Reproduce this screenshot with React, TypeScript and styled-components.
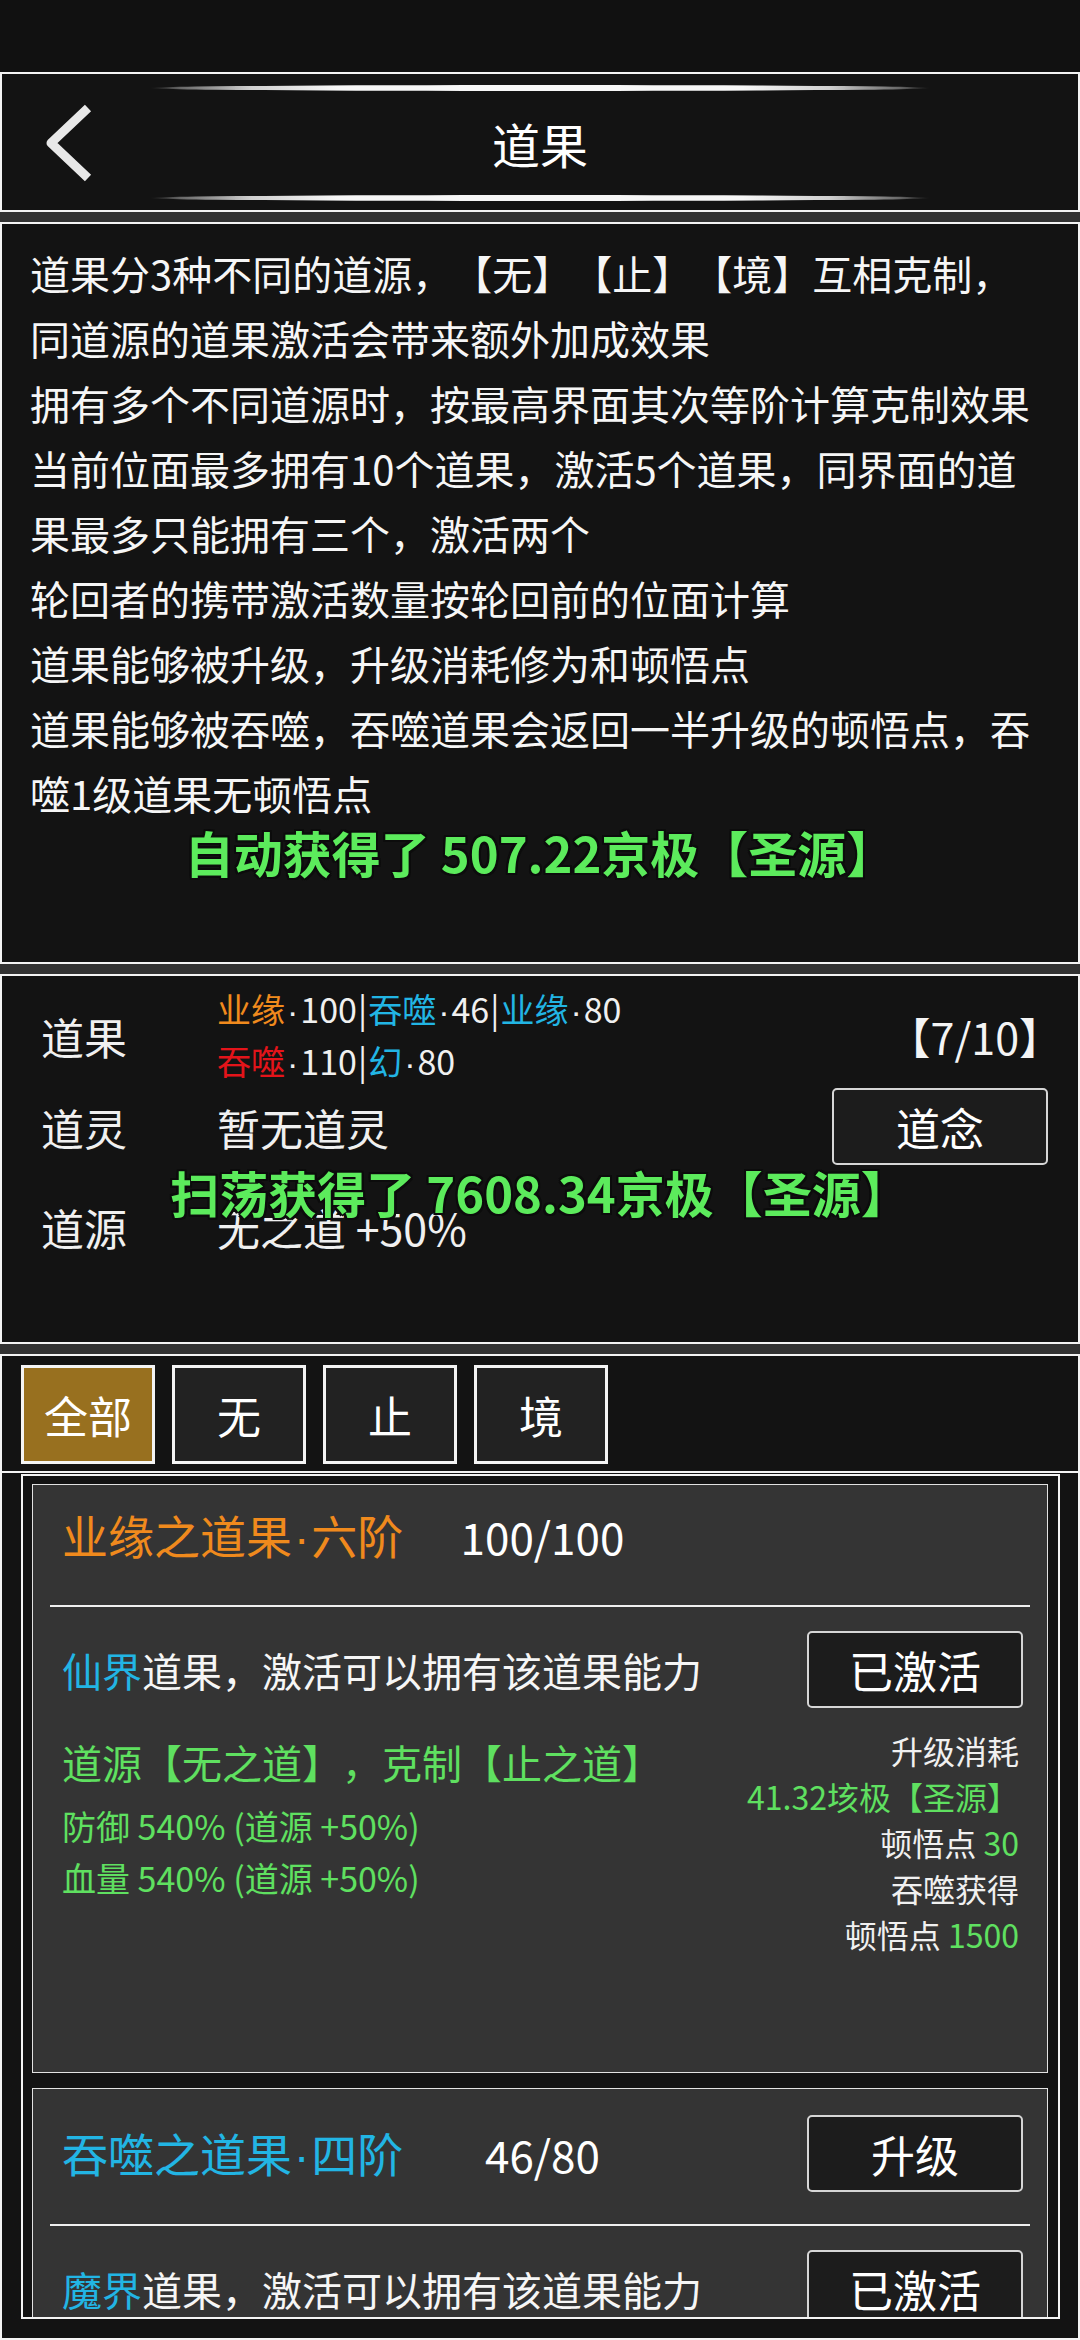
import React from "react";
import styled, { createGlobalStyle } from "styled-components";

const GlobalStyle = createGlobalStyle`
  html, body {
    margin: 0;
    padding: 0;
    background: #111;
  }
  body {
    font-family: "Noto Sans CJK SC", "Noto Sans", sans-serif;
    color: #f4f4f4;
    text-spacing-trim: space-all;
  }
  * { box-sizing: border-box; }
`

const colors = {
    orange: "#f08a1d",
    cyan: "#22b5e4",
    red: "#e4141a",
    green: "#5fe060",
    toast: "#5ceb5c",
    gold: "#98701f",
    line: "#f4f4f4",
}

const Screen = styled.div`
    position: relative;
    width: 1080px;
    height: 2340px;
    overflow: hidden;
    background: #333;
    display: flex;
    flex-direction: column;
`

const StatusBar = styled.div`
    height: 72px;
    background: #111;
    flex-shrink: 0;
`

const Panel = styled.div<{ $height?: number, $spaced?: boolean }>`
    flex-shrink: 0;
    height: ${p => p.$height ? `${p.$height}px` : "auto"};
    margin-top: ${p => p.$spaced ? "10px" : "0"};
    border: 2px solid ${colors.line};
    background: #131313;
`

/* header */
const HeaderPanel = styled(Panel)`
    padding: 11px 0 9px;
    display: flex;
    flex-direction: column;
    align-items: center;
`

const GlowLine = styled.div`
    width: 780px;
    height: 6px;
    border-radius: 50%;
    background: linear-gradient(90deg, rgba(120,120,120,0) 0%, #6a6a6a 4%, #cfcfcf 13%, #f6f6f6 24%, #f6f6f6 76%, #cfcfcf 87%, #6a6a6a 96%, rgba(120,120,120,0) 100%);
`

const HeaderRow = styled.div`
    flex: 1;
    width: 100%;
    display: grid;
    grid-template-columns: 1fr auto 1fr;
    align-items: center;
`

const BackButton = styled.div`
    padding-left: 41px;
    display: flex;
    align-items: center;
`

const Title = styled.div`
    font-size: 48px;
    line-height: 60px;
    color: #fff;
`

/* description */
const DescPanel = styled(Panel)`
    padding: 17px 40px 0 28px;
`

const Para = styled.div`
    font-size: 40px;
    line-height: 65px;
    color: #f6f6f6;
`

const Toast = styled.div<{ $top: number }>`
    position: absolute;
    left: 0;
    right: 0;
    top: ${p => p.$top}px;
    text-align: center;
    font-size: 49px;
    line-height: 60px;
    font-weight: 700;
    color: ${colors.toast};
    text-shadow: -2px -2px 0 #0c0c0c, 2px -2px 0 #0c0c0c, -2px 2px 0 #0c0c0c, 2px 2px 0 #0c0c0c,
        0 2px 0 #0c0c0c, 0 -2px 0 #0c0c0c, 2px 0 0 #0c0c0c, -2px 0 0 #0c0c0c;
    pointer-events: none;
`

/* status */
const StatusPanel = styled(Panel)`
    padding: 8px 30px 0 39px;
`

const InfoRow = styled.div<{ $min: number, $top?: number }>`
    display: grid;
    grid-template-columns: 176px 1fr auto;
    align-items: center;
    min-height: ${p => p.$min}px;
    margin-top: ${p => p.$top || 0}px;
`

const Label = styled.div`
    font-size: 43px;
    line-height: 60px;
    color: #f0f0f0;
`

const Value = styled.div`
    font-size: 43px;
    line-height: 60px;
    color: #f0f0f0;
`

const TagLines = styled.div`
    font-size: 34px;
    line-height: 50px;
    color: #f0f0f0;
    white-space: nowrap;
`

const Tint = styled.span<{ $c: string }>`
    color: ${p => p.$c};
`

// narrow latin middle dot, the CJK one renders full width
const Dot = styled.span`
    font-family: "Liberation Sans", sans-serif;
    margin: 0 2px;
`

const Bar = styled.span`
    color: #f0f0f0;
    margin: 0 1px;
`

const Count = styled.div`
    font-size: 43px;
    line-height: 60px;
    margin-right: -14px;
    color: #f4f4f4;
`

const Button = styled.div<{ $w?: number }>`
    width: ${p => p.$w || 216}px;
    height: 77px;
    border: 2px solid #d6d6d6;
    border-radius: 5px;
    background: #1c1c1c;
    color: #fff;
    font-size: 44px;
    display: flex;
    align-items: center;
    justify-content: center;
    flex-shrink: 0;
`

/* tabs */
const TabsPanel = styled(Panel)`
    padding: 9px 19px 7px;
    display: flex;
    gap: 17px;
`

const Tab = styled.div<{ $active?: boolean }>`
    width: 134px;
    height: 99px;
    border: 3px solid ${colors.line};
    background: ${p => p.$active ? colors.gold : "#222"};
    color: #fff;
    font-size: 44px;
    display: flex;
    align-items: center;
    justify-content: center;
`

/* list */
const ListPanel = styled(Panel)`
    flex: 1;
    border-top: none;
    padding: 1px 18px 0 19px;
`

const ScrollBox = styled.div`
    height: 845px;
    border: 2px solid ${colors.line};
    background: #131313;
    padding: 8px 10px 0 9px;
    overflow: hidden;
    display: flex;
    flex-direction: column;
    gap: 15px;
`

const Card = styled.div`
    flex-shrink: 0;
    min-height: 589px;
    border: 1px solid #e2e2e2;
    background: #343434;
`

const CardHead = styled.div`
    padding: 26px 24px 32px 29px;
    display: grid;
    grid-template-columns: 1fr auto 1fr;
    align-items: center;
    align-content: start;
    min-height: 120px;
`

const CardTitle = styled.div<{ $c: string }>`
    font-size: 46px;
    line-height: 46px;
    color: ${p => p.$c};
    white-space: nowrap;
`

const Progress = styled.div`
    font-size: 44px;
    line-height: 46px;
    color: #fff;
`

const HeadRight = styled.div`
    justify-self: end;
`

const Divider = styled.div`
    height: 2px;
    margin: 0 17px;
    background: #efefef;
`

const CardBody = styled.div`
    padding: 24px 24px 0 29px;
`

const ActivateRow = styled.div`
    display: flex;
    justify-content: space-between;
    align-items: center;
`

const ActivateText = styled.div`
    font-size: 40px;
    line-height: 60px;
    color: #f6f6f6;
`

const Details = styled.div`
    margin-top: 19px;
    padding-right: 4px;
    display: grid;
    grid-template-columns: 1fr auto;
    align-items: start;
`

const SourceLine = styled.div`
    font-size: 40px;
    line-height: 70px;
    color: ${colors.green};
`

const Stats = styled.div`
    padding-top: 3px;
`

const StatLine = styled.div`
    font-size: 34px;
    line-height: 52px;
    color: ${colors.green};
`

const CostColumn = styled.div`
    text-align: right;
    font-size: 32px;
    line-height: 46px;
    color: #f0f0f0;
`

const Green = styled.span`
    color: ${colors.green};
`

const BackIcon = () => (
    <svg width="52" height="78" viewBox="0 0 52 78">
        <polyline points="45,4 8,39 45,74" fill="none" stroke="#e8e8e8" strokeWidth="9" strokeLinejoin="round" />
    </svg>
)

const rules = [
    "道果分3种不同的道源，【无】【止】【境】互相克制，同道源的道果激活会带来额外加成效果",
    "拥有多个不同道源时，按最高界面其次等阶计算克制效果",
    "当前位面最多拥有10个道果，激活5个道果，同界面的道果最多只能拥有三个，激活两个",
    "轮回者的携带激活数量按轮回前的位面计算",
    "道果能够被升级，升级消耗修为和顿悟点",
    "道果能够被吞噬，吞噬道果会返回一半升级的顿悟点，吞噬1级道果无顿悟点",
]

const tabs = ["全部", "无", "止", "境"]

const App = () => {
    return <>
        <GlobalStyle />
        <Screen>
            <StatusBar />

            <HeaderPanel $height={140}>
                <GlowLine />
                <HeaderRow>
                    <BackButton><BackIcon /></BackButton>
                    <Title>道果</Title>
                    <div />
                </HeaderRow>
                <GlowLine />
            </HeaderPanel>

            <DescPanel $height={742} $spaced>
                {rules.map(r => <Para key={r}>{r}</Para>)}
            </DescPanel>

            <StatusPanel $height={370} $spaced>
                <InfoRow $min={91}>
                    <Label>道果</Label>
                    <TagLines>
                        <div>
                            <Tint $c={colors.orange}>业缘</Tint><Dot>·</Dot>100<Bar>|</Bar>
                            <Tint $c={colors.cyan}>吞噬</Tint><Dot>·</Dot>46<Bar>|</Bar>
                            <Tint $c={colors.cyan}>业缘</Tint><Dot>·</Dot>80
                        </div>
                        <div>
                            <Tint $c={colors.red}>吞噬</Tint><Dot>·</Dot>110<Bar>|</Bar>
                            <Tint $c={colors.cyan}>幻</Tint><Dot>·</Dot>80
                        </div>
                    </TagLines>
                    <Count>【7/10】</Count>
                </InfoRow>
                <InfoRow $min={77}>
                    <Label>道灵</Label>
                    <Value>暂无道灵</Value>
                    <Button>道念</Button>
                </InfoRow>
                <InfoRow $min={76} $top={24}>
                    <Label>道源</Label>
                    <Value>无之道 +50%</Value>
                    <div />
                </InfoRow>
            </StatusPanel>

            <TabsPanel $height={119} $spaced>
                {tabs.map((t, i) => <Tab key={t} $active={i === 0}>{t}</Tab>)}
            </TabsPanel>

            <ListPanel>
                <ScrollBox>
                    <Card>
                        <CardHead>
                            <CardTitle $c={colors.orange}>业缘之道果<Dot>·</Dot>六阶</CardTitle>
                            <Progress>100/100</Progress>
                            <HeadRight />
                        </CardHead>
                        <Divider />
                        <CardBody>
                            <ActivateRow>
                                <ActivateText><Tint $c={colors.cyan}>仙界</Tint>道果，激活可以拥有该道果能力</ActivateText>
                                <Button>已激活</Button>
                            </ActivateRow>
                            <Details>
                                <div>
                                    <SourceLine>道源【无之道】，克制【止之道】</SourceLine>
                                    <Stats>
                                        <StatLine>防御 540% (道源 +50%)</StatLine>
                                        <StatLine>血量 540% (道源 +50%)</StatLine>
                                    </Stats>
                                </div>
                                <CostColumn>
                                    <div>升级消耗</div>
                                    <div><Green>41.32垓极【圣源】</Green></div>
                                    <div>顿悟点 <Green>30</Green></div>
                                    <div>吞噬获得</div>
                                    <div>顿悟点 <Green>1500</Green></div>
                                </CostColumn>
                            </Details>
                        </CardBody>
                    </Card>

                    <Card>
                        <CardHead>
                            <CardTitle $c={colors.cyan}>吞噬之道果<Dot>·</Dot>四阶</CardTitle>
                            <Progress>46/80</Progress>
                            <HeadRight><Button>升级</Button></HeadRight>
                        </CardHead>
                        <Divider />
                        <CardBody>
                            <ActivateRow>
                                <ActivateText><Tint $c={colors.cyan}>魔界</Tint>道果，激活可以拥有该道果能力</ActivateText>
                                <Button>已激活</Button>
                            </ActivateRow>
                        </CardBody>
                    </Card>
                </ScrollBox>
            </ListPanel>

            <Toast $top={822}>自动获得了 507.22京极【圣源】</Toast>
            <Toast $top={1162}>扫荡获得了 7608.34京极【圣源】</Toast>
        </Screen>
    </>
}

export default App
